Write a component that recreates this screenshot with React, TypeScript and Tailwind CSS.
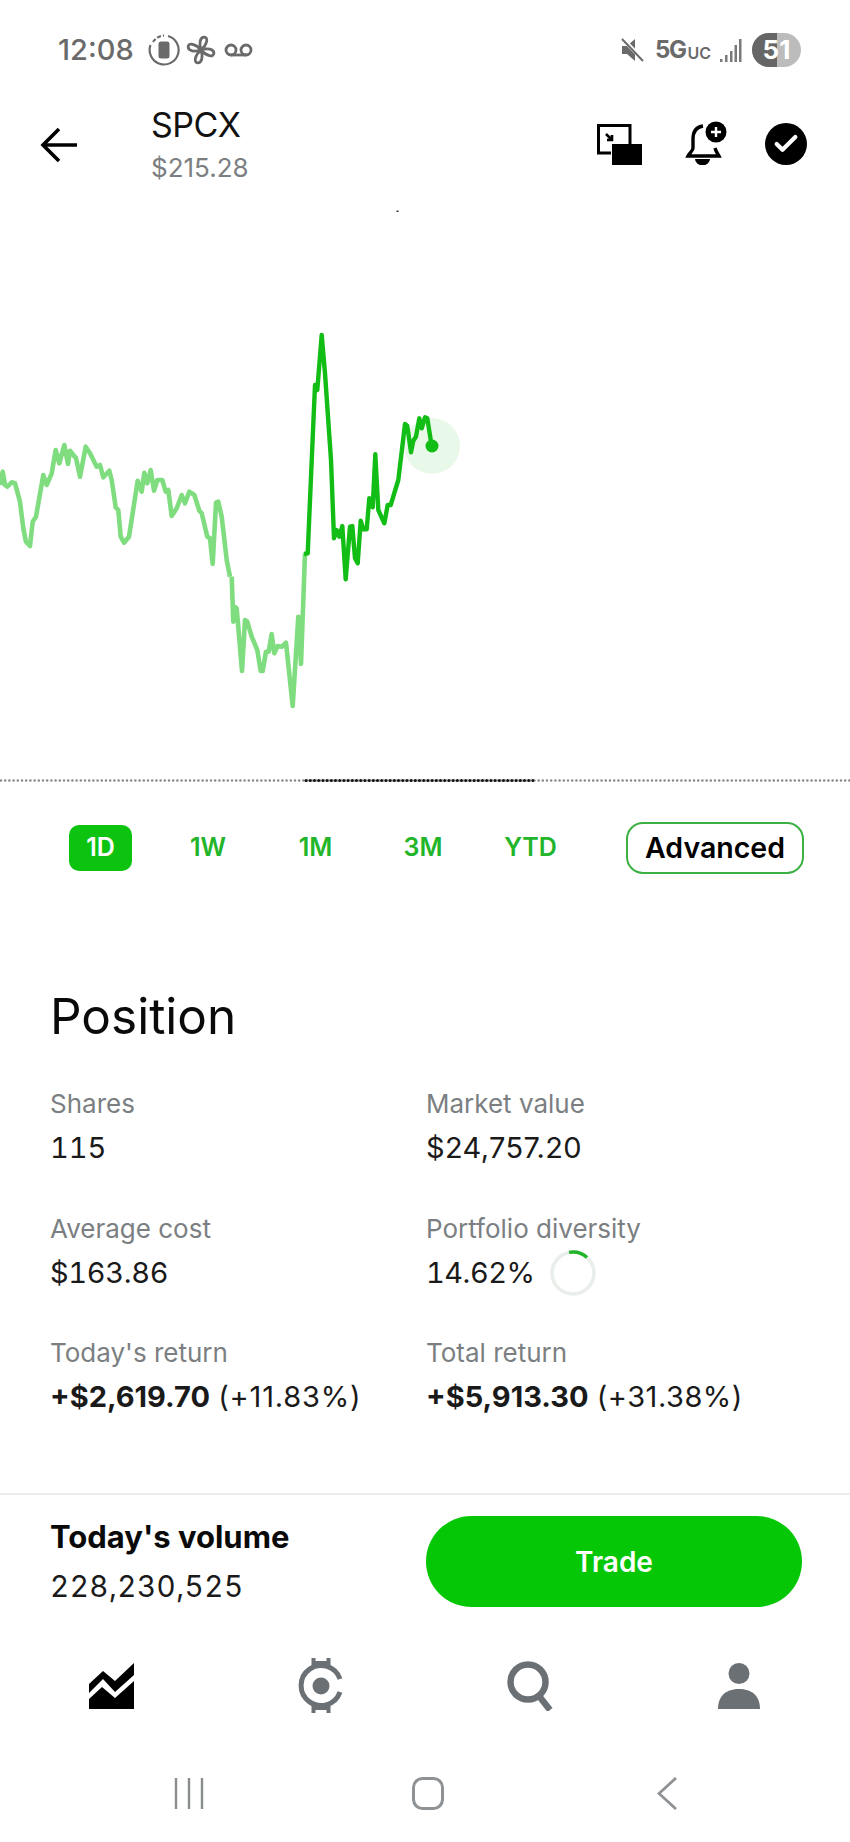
import { Check } from "lucide-react";

// points read off the chart, [x, y] in page pixels
const lightA = [[0,495],[8,455],[15,495],[22,500],[35,487],[45,490],[60,545],[70,625],[78,665],[90,678],[98,605],[108,590],[130,465],[140,495],[155,460],[167,390],[178,430],[193,375],[204,432],[210,392],[228,415],[240,470],[257,380],[270,400],[290,440],[300,435],[310,472],[328,452],[335,480],[347,562],[355,570],[362,650],[372,668],[387,650],[413,482],[425,515],[433,458],[442,490],[452,450],[462,512],[472,480],[487,480],[497,515],[505,510],[515,588],[530,565],[545,525],[555,550],[568,515],[583,525],[598,572],[605,580],[622,650],[630,655],[638,732],[648,548],[655,545],[665,590],[680,720],[690,770]].map(([x, y]) => [x / 3, 320 + y / 3]);
const lightB = [[35,110],[40,245],[44,200],[50,205],[66,393],[75,240],[82,245],[95,290],[112,330],[122,393],[128,393],[138,335],[146,335],[155,282],[163,340],[173,318],[185,320],[198,308],[218,498],[235,230],[243,372],[255,40]].map(([x, y]) => [220 + x / 3, 540 + y / 3]);
const dark = [[222,702],[233,700],[255,195],[262,210],[275,45],[285,160],[303,420],[312,655],[320,630],[328,650],[337,618],[347,778],[360,620],[367,618],[375,715],[383,730],[392,602],[400,628],[410,628],[418,535],[428,562],[436,403],[445,570],[463,610],[473,555],[482,555],[505,480],[525,312],[532,318],[543,397],[550,362],[558,350],[568,295],[575,325],[585,292],[592,295],[605,378]].map(([x, y]) => [230 + x / 3, 320 + y / 3]);

const toPoints = (pts: number[][]) => pts.map((p) => `${p[0].toFixed(1)},${p[1].toFixed(1)}`).join(" ");

const ranges = ["1D", "1W", "1M", "3M", "YTD"];

function Stat({ label, children }: { label: string; children: React.ReactNode }) {
  return (
    <div className="h-[124.5px]">
      <div className="text-[26px] leading-[32px] text-[#7b7f82]">{label}</div>
      <div className="mt-[12px] flex h-[32px] items-center text-[29px] leading-[32px] text-[#1a1a1a]">{children}</div>
    </div>
  );
}

export default function App() {
  return (
    <div className="flex h-[1842px] w-[850px] flex-col overflow-hidden bg-white font-['Inter',sans-serif] text-black">
      {/* status bar */}
      <div className="flex h-[100px] shrink-0 items-start justify-between pl-[58px] pr-[49px] pt-[33px] text-[#6a6a6a]">
        <div className="flex h-[34px] items-center">
          <span className="text-[29px] font-medium leading-[34px]">12:08</span>
          <svg width="32" height="32" viewBox="0 0 32 32" className="ml-[14px]" fill="none">
            <path d="M20 2 A14.5 14.5 0 1 1 2.5 11" stroke="#6a6a6a" strokeWidth="2.2" />
            <path d="M5 8 A14.5 14.5 0 0 1 16 1.5" stroke="#6a6a6a" strokeWidth="2.2" strokeDasharray="4 2" />
            <rect x="10.5" y="7.5" width="11" height="17" rx="2.5" fill="#6a6a6a" />
          </svg>
          <svg width="30" height="30" viewBox="0 0 28 28" className="ml-[6px]" fill="none" stroke="#6a6a6a" strokeWidth="2.6">
            <path d="M14 14 C12 8 13 2 17 2 C21 2 20 9 14 14 C20 12 26 13 26 17 C26 21 19 20 14 14 C16 20 15 26 11 26 C7 26 8 19 14 14 C8 16 2 15 2 11 C2 7 9 8 14 14 Z" />
          </svg>
          <svg width="29" height="16" viewBox="0 0 29 16" className="ml-[8px]" fill="none" stroke="#6a6a6a" strokeWidth="2.8">
            <circle cx="7" cy="8" r="5" />
            <circle cx="22" cy="8" r="5" />
            <path d="M7 13 H22" />
          </svg>
        </div>
        <div className="flex h-[34px] items-center">
          <svg width="24" height="24" viewBox="0 0 24 24" className="mr-[10px]" fill="#6a6a6a">
            <path d="M1 8 H6 L14 1 V23 L6 16 H1 Z" />
            <path d="M2 1 L23 23" stroke="#fff" strokeWidth="4" />
            <path d="M1 1 L22 23" stroke="#6a6a6a" strokeWidth="2" />
          </svg>
          <span className="text-[24px] font-bold leading-[34px] tracking-[-1.5px]">5G</span>
          <span className="ml-[2px] mt-[5px] text-[16px] font-semibold leading-[34px]">UC</span>
          <svg width="22" height="23" viewBox="0 0 22 23" className="ml-[9px]" fill="#7a7a7a">
            <rect x="0" y="20" width="2.5" height="3" />
            <rect x="5" y="16" width="2.5" height="7" />
            <rect x="10" y="12" width="2.5" height="11" />
            <rect x="14.5" y="6" width="2.5" height="17" />
            <rect x="19" y="0" width="2.5" height="23" />
          </svg>
          <div className="relative ml-[10px] flex h-[34px] w-[49px] overflow-hidden rounded-full bg-[#bcbcbc]">
            <div className="h-full w-[25px] bg-[#666]" />
            <span className="absolute inset-0 text-center text-[26px] font-bold leading-[34px] text-white">51</span>
          </div>
        </div>
      </div>

      {/* header */}
      <div className="flex h-[90px] shrink-0 items-start pl-[40px] pr-[43px]">
        <svg width="38" height="36" viewBox="0 0 38 36" className="mt-[27px]" fill="none" stroke="#000" strokeWidth="3.6">
          <path d="M37 18 H3" />
          <path d="M19 2 L3 18 L19 34" />
        </svg>
        <div className="ml-[73px] flex-1">
          <div className="mt-[5px] text-[34px] leading-[40px] tracking-[-0.5px] text-[#111]">SPCX</div>
          <div className="mt-[8px] text-[26px] leading-[30px] text-[#7b7f82]">$215.28</div>
        </div>
        <svg width="45" height="41" viewBox="0 0 45 41" className="mt-[24px]">
          <path d="M14 29 H1.5 V1.5 H33 V20" fill="none" stroke="#000" strokeWidth="3" />
          <rect x="15" y="20" width="30" height="21" fill="#000" />
          <path d="M9 10 L15 16 M15 11 V16 H10" fill="none" stroke="#000" strokeWidth="2.6" />
        </svg>
        <svg width="42" height="44" viewBox="0 0 42 44" className="ml-[43px] mt-[21px]">
          <path d="M18 5 C11 6 8 11 8 18 V27 C8 30 5 31 3 35 H34 C33 33 31 31 30 27" fill="none" stroke="#000" strokeWidth="3.4" />
          <path d="M10 37 H25 A7 6 0 0 1 10 37 Z" fill="#000" transform="translate(0 1)" />
          <circle cx="31" cy="11" r="10.5" fill="#000" />
          <path d="M31 6 V16 M26 11 H36" stroke="#fff" strokeWidth="2.4" />
        </svg>
        <div className="ml-[38px] mt-[23px] flex h-[42px] w-[42px] items-center justify-center rounded-full bg-black">
          <Check size={28} color="#fff" strokeWidth={3.6} />
        </div>
      </div>

      {/* chart */}
      <svg width="850" height="600" viewBox="0 190 850 600" className="block shrink-0">
        <rect x="396.5" y="210.5" width="2" height="1.5" fill="#333" />
        <circle cx="432" cy="446" r="28" fill="#e9f9e9" />
        <polyline points={toPoints(lightA)} fill="none" stroke="#7fdd80" strokeWidth="4.6" strokeLinejoin="round" />
        <polyline points={toPoints(lightB)} fill="none" stroke="#7fdd80" strokeWidth="4.6" strokeLinejoin="round" />
        <polyline points={toPoints(dark)} fill="none" stroke="#12bd15" strokeWidth="4.4" strokeLinejoin="round" />
        <circle cx="432" cy="446" r="6.5" fill="#12bd15" />
        <line x1="1" y1="780.5" x2="850" y2="780.5" stroke="#8a8a8a" strokeWidth="2.6" strokeLinecap="round" strokeDasharray="0 4.2" />
        <line x1="306" y1="780.5" x2="534" y2="780.5" stroke="#111" strokeWidth="3" strokeLinecap="round" strokeDasharray="0 4.2" />
      </svg>

      {/* time range */}
      <div className="mt-[32px] flex h-[52px] shrink-0 items-center pl-[69px] pr-[46px]">
        <div className="flex gap-[44.5px]">
          {ranges.map((r) => (
            <div
              key={r}
              className={
                r === "1D"
                  ? "flex h-[46px] w-[63px] items-center justify-center rounded-[10px] bg-[#0cc40f] text-[25px] font-semibold text-white"
                  : "flex h-[46px] w-[63px] items-center justify-center text-[25px] font-semibold text-[#22b52a]"
              }
            >
              {r}
            </div>
          ))}
        </div>
        <div className="ml-auto flex h-[52px] w-[178px] items-center justify-center rounded-[17px] border-2 border-[#3cb043] text-[28.5px] font-semibold leading-none">
          Advanced
        </div>
      </div>

      {/* position */}
      <div className="shrink-0 px-[50px]">
        <div className="mt-[114px] text-[49.5px] leading-[56px] text-[#0a0a0a]">Position</div>
        <div className="mt-[44px] grid grid-cols-[376px_1fr]">
          <Stat label="Shares"><span className="tabular-nums">115</span></Stat>
          <Stat label="Market value"><span className="tracking-[0.35px]">$24,757.20</span></Stat>
          <Stat label="Average cost"><span className="tabular-nums tracking-[-0.3px]">$163.86</span></Stat>
          <Stat label="Portfolio diversity">
            <span className="tabular-nums tracking-[-0.5px]">14.62%</span>
            <svg width="48" height="48" viewBox="0 0 48 48" className="ml-[15px]" fill="none">
              <circle cx="24" cy="24" r="21" stroke="#e9eeea" strokeWidth="3.5" />
              <path d="M20 3.4 A21 21 0 0 1 38 8.5" stroke="#22b52a" strokeWidth="3.5" />
            </svg>
          </Stat>
          <Stat label="Today's return">
            <span><b className="font-bold">+$2,619.70</b> <span className="tracking-[0.8px]">(+11.83%)</span></span>
          </Stat>
          <Stat label="Total return">
            <span><b className="font-bold">+$5,913.30</b> <span className="tracking-[0.5px]">(+31.38%)</span></span>
          </Stat>
        </div>
      </div>

      {/* volume + trade, tab bar, android nav */}
      <div className="mt-auto h-[349px] shrink-0 border-t-2 border-[#eceeee]">
        <div className="mt-[21px] flex h-[91px] items-start justify-between pl-[50px] pr-[48px]">
          <div>
            <div className="mt-[3px] text-[31px] font-bold leading-[36px] text-[#0a0a0a]">Today's volume</div>
            <div className="mt-[13px] text-[29.5px] leading-[36px] tabular-nums tracking-[0.5px] text-[#1a1a1a]">228,230,525</div>
          </div>
          <button className="flex h-[91px] w-[376px] items-center justify-center rounded-full bg-[#05c705] text-[28px] font-semibold text-white">
            Trade
          </button>
        </div>

        <div className="ml-[7px] mt-[51px] grid h-[55px] w-[836px] grid-cols-4 items-center justify-items-center">
          <svg width="45" height="47" viewBox="89 1660 45 47" fill="#000">
            <path d="M89 1682 L103 1669 L115 1679 L134 1661 V1673 L115 1690 L103 1677 L89 1691 Z" />
            <path d="M89 1697 L102 1685 L115 1696 L134 1679 V1707 H89 Z" />
          </svg>
          <svg width="46" height="55" viewBox="0 0 46 55" fill="none" stroke="#6b7075" strokeWidth="5">
            <path d="M15.5 0 V9 M30.5 0 V9 M15.5 5 H30.5 M15.5 46 V55 M30.5 46 V55 M15.5 50 H30.5" strokeWidth="4" />
            <path d="M42 21 A20 20 0 1 0 42 34" />
            <circle cx="23" cy="28" r="8.5" fill="#6b7075" stroke="none" />
          </svg>
          <svg width="48" height="50" viewBox="0 0 48 50" className="ml-[3px]" fill="none" stroke="#6b7075" strokeWidth="6.5">
            <circle cx="21" cy="21" r="17.5" />
            <path d="M32 35 L43 49" />
          </svg>
          <svg width="42" height="46" viewBox="0 0 42 46" fill="#6b7075">
            <ellipse cx="21" cy="10.5" rx="10.5" ry="10.5" />
            <path d="M0 46 C0 32 9 26 21 26 C33 26 42 32 42 46 Z" />
          </svg>
        </div>

        <div className="ml-[70px] mt-[64px] grid h-[33px] w-[716px] grid-cols-3 items-center justify-items-center">
          <svg width="30" height="31" viewBox="0 0 30 31" stroke="#8a8d90" strokeWidth="2.4">
            <path d="M2 0 V31 M15 0 V31 M28 0 V31" />
          </svg>
          <svg width="32" height="33" viewBox="0 0 32 33" fill="none" stroke="#8f9295" strokeWidth="3">
            <rect x="1.5" y="1.5" width="29" height="30" rx="9" />
          </svg>
          <svg width="20" height="33" viewBox="0 0 20 33" fill="none" stroke="#8f9295" strokeWidth="2.8">
            <path d="M19 1 L2 16.5 L19 32" />
          </svg>
        </div>
      </div>
    </div>
  );
}
